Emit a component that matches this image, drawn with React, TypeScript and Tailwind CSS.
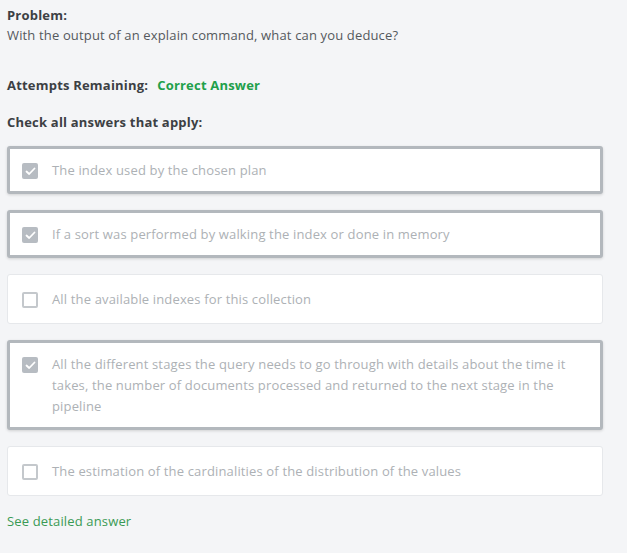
import React from 'react'

const answers = [
  { text: 'The index used by the chosen plan', checked: true },
  { text: 'If a sort was performed by walking the index or done in memory', checked: true },
  { text: 'All the available indexes for this collection', checked: false },
  {
    text: 'All the different stages the query needs to go through with details about the time it takes, the number of documents processed and returned to the next stage in the pipeline',
    checked: true,
  },
  { text: 'The estimation of the cardinalities of the distribution of the values', checked: false },
]

function Box({ checked }: { checked: boolean }) {
  if (checked) {
    return (
      <span className="mt-[3px] flex h-4 w-4 shrink-0 items-center justify-center rounded-[2px] bg-[#b7bcc2]">
        <svg width="11" height="9" viewBox="0 0 11 9" fill="none">
          <path d="M1.5 4.5 L4.2 7 L9.5 1.5" stroke="#ffffff" strokeWidth="1.8" strokeLinecap="round" strokeLinejoin="round" />
        </svg>
      </span>
    )
  }
  return <span className="mt-[3px] h-4 w-4 shrink-0 rounded-[2px] border-2 border-[#c4c8cc] bg-white" />
}

export default function App() {
  return (
    <div className="min-h-screen bg-[#f4f5f7] px-[7px] pt-[6px] pr-[24px] font-['Open_Sans',sans-serif] text-[13px]">
      <div className="font-bold text-[#3c4044] leading-[19px] text-[13px] tracking-[0.2px]">Problem:</div>
      <div className="text-[#55595d] leading-[19px] mt-[1px] text-[13px] tracking-[0.15px]">
        With the output of an explain command, what can you deduce?
      </div>

      <div className="mt-[31px] flex gap-[9px] font-bold leading-[19px] text-[13px] tracking-[0.2px]">
        <span className="text-[#3c4044]">Attempts Remaining:</span>
        <span className="text-[#21a04b]">Correct Answer</span>
      </div>

      <div className="mt-[18px] font-bold text-[#3c4044] leading-[19px] text-[13px] tracking-[0.2px]">
        Check all answers that apply:
      </div>

      <div className="mt-[14px] flex flex-col gap-4">
        {answers.map((a) => (
          <div
            key={a.text}
            className={
              a.checked
                ? 'flex gap-[14px] rounded-[3px] border-[3px] border-[#b3b8bd] bg-white pl-[12px] pr-6 pt-[11px] pb-[10px] shadow-[0_1px_3px_rgba(0,0,0,0.15)]'
                : 'flex gap-[14px] rounded-[3px] border border-[#e6e8eb] bg-white pl-[14px] pr-6 pt-[14px] pb-[13px]'
            }
          >
            <Box checked={a.checked} />
            <span className="leading-[21px] text-[#adb1b5] text-[13px] tracking-[0.15px]">{a.text}</span>
          </div>
        ))}
      </div>

      <div className="mt-[16px] text-[#3a9a55] leading-[19px] text-[13px] tracking-[0.15px]">See detailed answer</div>
    </div>
  )
}
